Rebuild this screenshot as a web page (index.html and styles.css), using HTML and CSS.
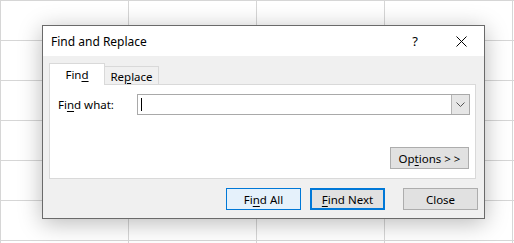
FILE: index.html
```html
<!DOCTYPE html>
<html lang="en">
<head>
  <meta charset="UTF-8">
  <title>Find and Replace</title>
  <link rel="stylesheet" href="styles.css">
</head>
<body>
  <div class="dialog">
    <div class="titlebar">
      <span class="title">Find and Replace</span>
      <span class="cap-btn">?</span>
      <span class="cap-btn">
        <svg width="11" height="11" viewBox="0 0 11 11"><path d="M0.5 0.5 L10.5 10.5 M10.5 0.5 L0.5 10.5" stroke="#000" stroke-width="1" fill="none"/></svg>
      </span>
    </div>

    <div class="content">
      <div class="tabs">
        <div class="tab active">Fin<u>d</u></div>
        <div class="tab">Re<u>p</u>lace</div>
      </div>

      <div class="panel">
        <div class="find-row">
          <label>Fi<u>n</u>d what:</label>
          <div class="combo">
            <span class="caret"></span>
            <span class="drop">
              <svg width="9" height="5" viewBox="0 0 9 5"><path d="M0.5 0.5 L4.5 4.5 L8.5 0.5" stroke="#555" stroke-width="1" fill="none"/></svg>
            </span>
          </div>
        </div>
        <div class="options-row">
          <button class="btn">Op<u>t</u>ions &gt; &gt;</button>
        </div>
      </div>

      <div class="actions">
        <button class="btn hover">Fi<u>n</u>d All</button>
        <button class="btn default"><u>F</u>ind Next</button>
        <button class="btn close">Close</button>
      </div>
    </div>
  </div>
</body>
</html>
```

FILE: styles.css
```css
html, body { margin: 0; height: 100%; }
body {
  font-family: "Noto Sans", "Open Sans", sans-serif;
  font-size: 11.5px;
  color: #000;
  background-color: #fff;
  background-image:
    linear-gradient(to right, #d6d6d6 0 1px, transparent 1px 128px, #d6d6d6 128px 129px, transparent 129px 256px, #d6d6d6 256px 257px, transparent 257px 384px, #d6d6d6 384px 385px, transparent 385px 512px, #d6d6d6 512px 513px, transparent 513px),
    repeating-linear-gradient(to bottom, #d6d6d6 0 1px, transparent 1px 40px);
  overflow: hidden;
}
u { text-decoration-thickness: 1px; text-underline-offset: 2px; }

.dialog {
  width: 441px;
  margin: 25px 0 0 42px;
  border: 1px solid #6a6a6a;
  background: #f0f0f0;
  box-shadow: 0 4px 22px rgba(0, 0, 0, 0.28);
}

.titlebar { display: flex; align-items: center; height: 30px; background: #fff; }
.title { flex: 1; padding-left: 8px; font-size: 12px; }
.cap-btn { width: 46px; height: 30px; display: flex; align-items: center; justify-content: center; font-size: 13px; }

.content { padding: 7px 6px 8px 6px; }

.tabs { display: flex; align-items: flex-end; height: 21px; position: relative; z-index: 1; }
.tab {
  box-sizing: border-box;
  height: 18px;
  width: 55px;
  border: 1px solid #d9d9d9;
  border-bottom: none;
  background: #f0f0f0;
  display: flex; align-items: center; justify-content: center;
  margin-left: -1px;
  padding-top: 1px;
}
.tab.active { height: 22px; width: 56px; margin-left: 0; margin-bottom: -1px; background: #fff; padding-top: 0; }

.panel {
  box-sizing: border-box;
  width: 427px;
  height: 95px;
  border: 1px solid #d9d9d9;
  background: #fff;
  padding: 9px 5px 9px 8px;
  display: flex; flex-direction: column; justify-content: space-between;
}
.find-row { display: flex; align-items: center; }
.find-row label { width: 79px; }
.combo {
  box-sizing: border-box;
  width: 333px; height: 21px;
  border: 1px solid #a9a9a9;
  display: flex; align-items: center; justify-content: space-between;
}
.caret { width: 1px; height: 13px; background: #000; margin-left: 3px; }
.drop {
  box-sizing: border-box;
  width: 18px; height: 19px;
  border-left: 1px solid #b4b4b4;
  background: #e6e6e6;
  display: flex; align-items: center; justify-content: center;
}
.options-row { display: flex; justify-content: flex-end; padding-right: 1px; }

.btn {
  box-sizing: border-box;
  width: 75px; height: 22px;
  font: inherit; color: #000;
  background: #e1e1e1;
  border: 1px solid #adadad;
  padding: 0;
}
.options-row .btn { width: 79px; }
.actions { display: flex; justify-content: flex-end; margin-top: 9px; }
.btn.hover { background: #e5f1fb; border-color: #0078d7; }
.btn.default { border: 2px solid #0078d7; margin-left: 9px; }
.btn.close { margin-left: 18px; }
```
